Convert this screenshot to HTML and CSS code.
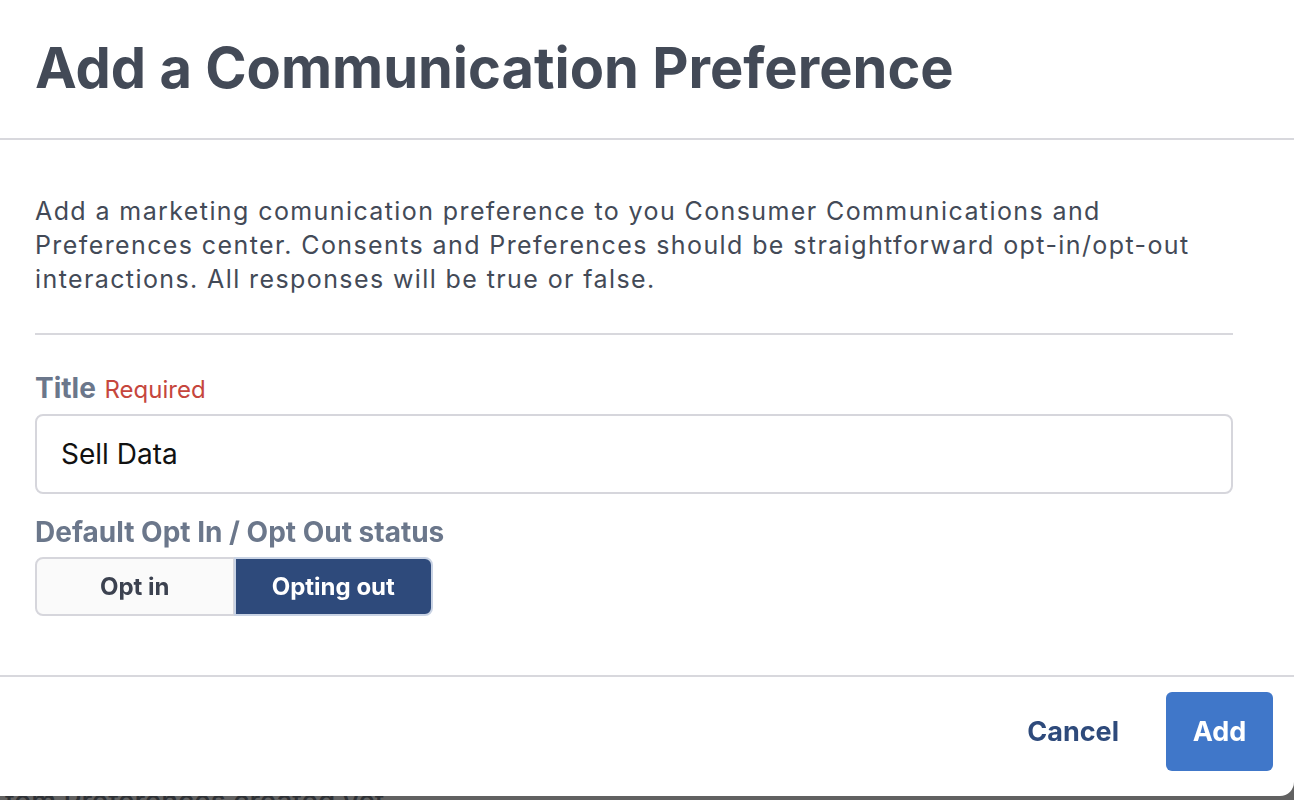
FILE: index.html
```html
<!DOCTYPE html>
<html lang="en">
<head>
<meta charset="utf-8">
<title>Add a Communication Preference</title>
<link rel="stylesheet" href="styles.css">
</head>
<body>
<div class="page">
  <p class="page-empty">tom Preferences created yet</p>
</div>
<div class="overlay">
  <div class="modal" role="dialog" aria-labelledby="modal-title">
    <header class="modal-header">
      <h1 id="modal-title" class="modal-title">Add a Communication Preference</h1>
    </header>
    <section class="modal-body">
      <p class="modal-desc">Add a marketing comunication preference to you Consumer Communications and Preferences center. Consents and Preferences should be straightforward opt-in/opt-out interactions. All responses will be true or false.</p>
      <hr class="modal-rule">
      <label class="field-label" for="title-input">Title <span class="required">Required</span></label>
      <input id="title-input" class="text-input" type="text" value="Sell Data">
      <div class="field-label field-label--status">Default Opt In / Opt Out status</div>
      <div class="segmented">
        <button class="segment" type="button">Opt in</button>
        <button class="segment segment--active" type="button">Opting out</button>
      </div>
    </section>
    <footer class="modal-footer">
      <button class="btn btn-link" type="button">Cancel</button>
      <button class="btn btn-primary" type="button">Add</button>
    </footer>
  </div>
</div>
</body>
</html>
```
FILE: styles.css
```css
* { box-sizing: border-box; }

html, body {
  margin: 0;
  padding: 0;
  width: 1294px;
  height: 800px;
  overflow: hidden;
  font-family: Inter, "Noto Sans", "Liberation Sans", sans-serif;
  background: #ffffff;
}

.page {
  height: 800px;
  padding-top: 784px;
  padding-left: 5px;
}

.page-empty {
  margin: 0;
  font-size: 28px;
  line-height: 34px;
  font-weight: 500;
  color: #7a808c;
  white-space: nowrap;
}

.overlay {
  position: fixed;
  inset: 0;
  background: rgba(0, 0, 0, 0.62);
}

.modal {
  position: absolute;
  left: 0;
  top: 0;
  width: 1294px;
  height: 796px;
  background: #ffffff;
  border-bottom-right-radius: 14px;
  display: flex;
  flex-direction: column;
}

.modal-header {
  padding: 34px 35px 36px;
  border-bottom: 2px solid #d8d8dd;
}

.modal-title {
  margin: 0;
  font-size: 56px;
  line-height: 68px;
  font-weight: 700;
  color: #434a57;
}

.modal-body {
  flex: 1;
  padding: 54px 61px 0 35px;
  display: flex;
  flex-direction: column;
  align-items: flex-start;
}

.modal-desc {
  margin: 0;
  font-size: 25px;
  line-height: 34px;
  letter-spacing: 1.4px;
  color: #434a57;
}

.modal-rule {
  align-self: stretch;
  margin: 37px 0 0;
  border: 0;
  border-top: 2px solid #d8d8dd;
  height: 0;
}

.field-label {
  display: block;
  margin-top: 36px;
  font-size: 28px;
  line-height: 34px;
  font-weight: 700;
  color: #6b778b;
}

.required {
  font-size: 24px;
  font-weight: 400;
  color: #c6463d;
  margin-left: 2px;
}

.text-input {
  align-self: stretch;
  margin-top: 7px;
  height: 80px;
  padding: 0 24px;
  border: 2px solid #d6d6dc;
  border-radius: 8px;
  font-family: inherit;
  font-size: 28px;
  color: #111111;
  background: #ffffff;
  outline: none;
}

.field-label--status {
  margin-top: 21px;
}

.segmented {
  margin-top: 8px;
  display: flex;
  width: 398px;
  height: 59px;
}

.segment {
  flex: 1;
  font-family: inherit;
  font-size: 24px;
  font-weight: 700;
  cursor: pointer;
  padding: 0;
}

.segment:first-child {
  background: #fafafa;
  color: #3c4250;
  border: 2px solid #d6d6dc;
  border-right-width: 1px;
  border-radius: 8px 0 0 8px;
}

.segment--active {
  background: #2e4a7b;
  color: #ffffff;
  border: 2px solid #c9d3e4;
  border-radius: 0 8px 8px 0;
}

.modal-footer {
  border-top: 2px solid #d8d8dd;
  padding: 15px 21px 25px;
  display: flex;
  justify-content: flex-end;
  align-items: center;
  gap: 23px;
}

.btn {
  font-family: inherit;
  font-size: 27px;
  font-weight: 700;
  border: 0;
  cursor: pointer;
  height: 79px;
  border-radius: 6px;
}

.btn-link {
  background: transparent;
  color: #2e4a7b;
  padding: 0 24px;
}

.btn-primary {
  background: #4077c9;
  color: #ffffff;
  width: 107px;
  padding: 0;
}
```
